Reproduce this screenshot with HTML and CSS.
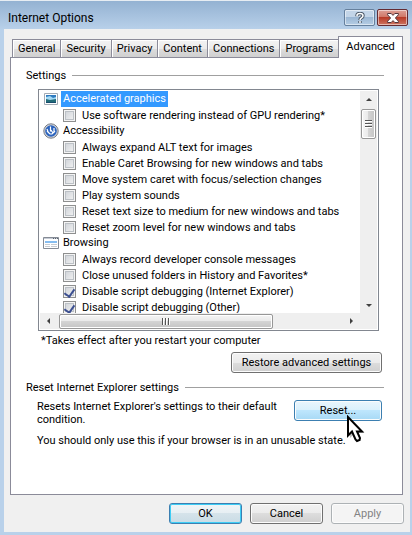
FILE: index.html
```html
<!DOCTYPE html>
<html lang="en">
<head>
  <meta charset="UTF-8">
  <meta name="viewport" content="width=device-width, initial-scale=1.0">
  <title>Internet Options</title>
  <link rel="stylesheet" href="styles.css">
</head>
<body>
  <div class="window">
    <!-- Title bar -->
    <header class="title-bar">
      <h1>Internet Options</h1>
      <button class="caption-btn help-btn" aria-label="Help">
        <svg viewBox="0 0 12 12"><path d="M3 4.2V3.5Q3 1.5 6 1.5T9 3.7Q9 5 7.5 5.8T6 8M6 9v2" fill="none" stroke="#4a5766" stroke-width="3.4"/><path d="M3 4.2V3.5Q3 1.5 6 1.5T9 3.7Q9 5 7.5 5.8T6 8M6 9v2" fill="none" stroke="#fff" stroke-width="1.5"/></svg>
      </button>
      <button class="caption-btn close-btn" aria-label="Close">
        <svg viewBox="0 0 12 12"><path d="M.6 1.5h3.6L6 3.4l1.8-1.9h3.6v1.3L8.4 6l3 3.200v1.300H7.800L6 8.600l-1.800 1.900H.6V9.200l3-3.200-3-3.200z" fill="#fff" stroke="#53363c"/></svg>
      </button>
    </header>

    <main class="client">
      <nav class="tabs" role="tablist">
        <button class="tab" role="tab">General</button>
        <button class="tab" role="tab">Security</button>
        <button class="tab" role="tab">Privacy</button>
        <button class="tab" role="tab">Content</button>
        <button class="tab" role="tab">Connections</button>
        <button class="tab" role="tab">Programs</button>
        <button class="tab active" role="tab" aria-selected="true">Advanced</button>
      </nav>

      <div class="panel" role="tabpanel">
        <h2 class="group-title">Settings</h2>

        <div class="list-box">
          <div class="list">
            <div class="row heading selected">
              <svg viewBox="0 0 16 16"><path d="M1.500 2.500h13v11h-13z" fill="#fff" stroke="#a3abb5"/><path d="M3 4h10v8H3z" fill="#2f7cc0"/><path d="M3 6l4-1 3 2 3-1v3H3z" fill="#a5daf5"/><path d="M3 8l4 1 6-1v4H3z" fill="#226b78"/><path d="M3 11h10v1H3z" fill="#174c6c"/></svg>
              <span>Accelerated graphics</span>
            </div>
            <label class="row"><input type="checkbox">Use software rendering instead of GPU rendering*</label>
            <div class="row heading">
              <svg viewBox="0 0 16 16"><circle cx="8" cy="8" r="7.200" fill="#d2d5da" stroke="#777b84"/><circle cx="8" cy="8" r="5.800" fill="#2b63bd"/><path d="M7.500 3.500v5M4 6l1.500 4M11 5v5M4 8l3 3h2l3-3M8 7l2 3" fill="none" stroke="#fff" stroke-width="1.200"/></svg>
              <span>Accessibility</span>
            </div>
            <label class="row"><input type="checkbox">Always expand ALT text for images</label>
            <label class="row"><input type="checkbox">Enable Caret Browsing for new windows and tabs</label>
            <label class="row"><input type="checkbox">Move system caret with focus/selection changes</label>
            <label class="row"><input type="checkbox">Play system sounds</label>
            <label class="row"><input type="checkbox">Reset text size to medium for new windows and tabs</label>
            <label class="row"><input type="checkbox">Reset zoom level for new windows and tabs</label>
            <div class="row heading">
              <svg viewBox="0 0 16 16"><path d="M.5 2.500h15v11H.5z" fill="#fff" stroke="#858b95"/><path d="M1 3h14v1H1z" fill="#c5cbd5"/><path d="M10 3h1v1h-1zM12 3h1v1h-1zM14 3h1v1h-1z" fill="#59616d"/><path d="M2 6h12v2H2z" fill="#86bdf0"/><path d="M2 9.500h5M8 9.500h6M2 11.500h5M8 11.500h6" stroke="#c8ccd2"/></svg>
              <span>Browsing</span>
            </div>
            <label class="row"><input type="checkbox">Always record developer console messages</label>
            <label class="row"><input type="checkbox">Close unused folders in History and Favorites*</label>
            <label class="row"><input type="checkbox" checked>Disable script debugging (Internet Explorer)</label>
            <label class="row"><input type="checkbox" checked>Disable script debugging (Other)</label>
          </div>
          <div class="scrollbar vertical">
            <i class="arrow up"></i>
            <div class="thumb"><i class="grip"></i></div>
            <i class="arrow down"></i>
          </div>
          <div class="scrollbar horizontal">
            <i class="arrow left"></i>
            <div class="thumb"><i class="grip"></i></div>
            <i class="arrow right"></i>
          </div>
          <div class="scrollbar corner"></div>
        </div>

        <p class="footnote">*Takes effect after you restart your computer</p>
        <div class="restore-row">
          <button class="btn restore-btn">Restore advanced settings</button>
        </div>

        <h2 class="group-title">Reset Internet Explorer settings</h2>
        <div class="reset-row">
          <p>Resets Internet Explorer's settings to their default condition.</p>
          <div class="reset-wrap">
            <button class="btn reset-btn">Reset...</button>
            <svg class="pointer" viewBox="0 0 19 29"><path d="M4 4v19l4-4 3 7h4l-3-8h6z" fill="#000" opacity=".25"/><path d="M2 2v18.500l4-4 3.500 8 1.500 1.500 2.500-1 .5-2-3-6.500h5z" fill="#fff" stroke="#000" stroke-width="2"/></svg>
          </div>
        </div>
        <p class="hint">You should only use this if your browser is in an unusable state.</p>
      </div>

      <!-- Dialog buttons -->
      <footer class="dialog-buttons">
        <button class="btn default">OK</button>
        <button class="btn">Cancel</button>
        <button class="btn" disabled>Apply</button>
      </footer>
    </main>
  </div>
</body>
</html>
```
FILE: styles.css
```css
:root {
  --frame: #b9d1ea;
  --face: #f0f0f0;
  --line: #8b8b99;
  --text: #000;
}

* {
  margin: 0;
  padding: 0;
  box-sizing: border-box;
}

body {
  font-family: Tahoma, Roboto, sans-serif;
  font-size: 11px;
  line-height: 13px;
  color: var(--text);
  background: #fff;
}

button,
input {
  font: inherit;
  color: inherit;
}

h1,
h2 {
  font-size: inherit;
  font-weight: normal;
}

.window {
  display: flex;
  flex-direction: column;
  min-height: 100vh;
  padding: 0 2px 3px 4px;
  border-top: 1px solid #e7edf3;
  background: linear-gradient(#94b2d2, var(--frame) 29px);
}

/* Title bar */
.title-bar {
  display: flex;
  gap: 2px;
  height: 28px;
  padding: 8px 2px 0 4px;
}

.title-bar h1 {
  flex: 1;
  font-size: 12px;
  line-height: 18px;
}

.caption-btn {
  display: flex;
  align-items: center;
  justify-content: center;
  width: 31px;
  height: 17px;
  border: 1px solid #66809d;
  border-radius: 2px;
  box-shadow: inset 0 0 0 1px rgba(255, 255, 255, 0.5);
  background: linear-gradient(#c3d5e8 50%, #9bb7d4 50%, #b5cde4);
}

.caption-btn svg {
  width: 12px;
  height: 12px;
}

.close-btn {
  border-color: #642b32;
  background: linear-gradient(#dda096, #cf7463 50%, #b83b27 50%, #cd7562);
}

/* Client area */
.client {
  flex: 1;
  display: flex;
  flex-direction: column;
  padding: 7px 6px 8px;
  background: var(--face);
}

.tabs {
  display: flex;
  align-items: flex-end;
  height: 21px;
  padding: 0 2px;
  position: relative;
}

.tab {
  height: 18px;
  padding: 0 5px;
  border: 1px solid var(--line);
  border-bottom: 0;
  margin-right: -1px;
  white-space: nowrap;
  box-shadow: inset 1px 1px #fff;
  background: linear-gradient(#f3f3f3, #ebebeb 50%, #dddddd 50%, #d0d0d0);
}

.tab.active {
  height: 22px;
  margin-bottom: -1px;
  padding: 0 7px 3px;
  background: #fff;
}

.panel {
  flex: 1;
  margin-right: 1px;
  padding: 11px 18px 0 15px;
  border: 1px solid var(--line);
  background: #fff;
}

.group-title {
  display: flex;
  align-items: center;
  gap: 6px;
}

.group-title::after {
  content: "";
  flex: 1;
  border-top: 1px solid #a0a0a0;
}

/* Settings list */
.list-box {
  display: grid;
  grid-template-columns: 1fr 17px;
  grid-template-rows: 222px 16px;
  margin: 7px 5px 0 12px;
  padding: 1px;
  border: 1px solid #828790;
}

.list {
  overflow: hidden;
}

.row {
  display: flex;
  align-items: center;
  gap: 6px;
  height: 16px;
  padding-left: 23px;
  white-space: nowrap;
}

.heading {
  gap: 2px;
  padding-left: 3px;
}

.heading svg {
  width: 16px;
  height: 16px;
}

.heading span {
  padding: 0 2px;
  line-height: 16px;
}

.selected span {
  color: #fff;
  background: #3399ff;
}

.row input {
  appearance: none;
  width: 13px;
  height: 13px;
  border: 1px solid #8e8f8f;
  box-shadow: inset 0 0 0 1px #f4f4f4, inset 0 0 0 2px #bcc1c6;
  background: linear-gradient(135deg, #cbcfd5, #f6f6f6);
}

.row input:checked::after {
  content: "";
  display: block;
  width: 5px;
  height: 8px;
  margin: 1px auto 0;
  border: solid #3c4f91;
  border-width: 0 2px 2px 0;
  transform: rotate(35deg);
}

/* Scrollbars */
.scrollbar {
  display: flex;
  align-items: center;
  background: #efefef;
}

.vertical {
  flex-direction: column;
  justify-content: space-between;
}

.arrow {
  border: 3px solid transparent;
}

.arrow.up {
  margin-top: 4px;
  border-bottom-color: #404040;
}

.arrow.down {
  margin-bottom: 3px;
  border-top-color: #404040;
}

.arrow.left {
  margin: 0 9px 0 4px;
  border-right-color: #404040;
}

.arrow.right {
  margin: 0 4px 0 auto;
  border-left-color: #404040;
}

.thumb {
  display: flex;
  align-items: center;
  justify-content: center;
  border: 1px solid #979797;
  border-radius: 2px;
  box-shadow: inset 0 0 0 1px #fff;
}

.vertical .thumb {
  width: 15px;
  height: 30px;
  margin: 8px 0 auto;
  background: linear-gradient(90deg, #f5f5f5, #e9e9e9 50%, #d4d4d4 50%, #c4c4c4);
}

.horizontal .thumb {
  width: 67%;
  height: 15px;
  background: linear-gradient(#f5f5f5, #e9e9e9 50%, #d4d4d4 50%, #c4c4c4);
}

.grip {
  width: 7px;
  height: 8px;
  background: repeating-linear-gradient(#555 0 1px, #fff 1px 2px, transparent 2px 3px);
}

.horizontal .grip {
  width: 8px;
  height: 7px;
  background: repeating-linear-gradient(90deg, #555 0 1px, #fff 1px 2px, transparent 2px 3px);
}

.footnote {
  padding: 3px 0 0 15px;
}

/* Buttons */
.btn {
  width: 73px;
  height: 21px;
  border: 1px solid #707070;
  border-radius: 3px;
  box-shadow: inset 0 0 0 1px #fcfcfc;
  background: linear-gradient(#f2f2f2, #ebebeb 50%, #dddddd 50%, #cfcfcf);
}

.btn:disabled {
  border-color: #adb2b5;
  color: #838383;
  background: #f4f4f4;
}

.btn.default {
  border-color: #3c7fb1;
  box-shadow: inset 0 0 0 1px #3dcdf5;
  background: linear-gradient(#f0f5f7, #e6eff3 50%, #d5e3ea 50%, #c9dce5);
}

.restore-row {
  display: flex;
  justify-content: flex-end;
  padding: 5px 2px 8px;
}

.restore-btn {
  width: 151px;
}

.reset-row {
  display: flex;
  gap: 4px;
  padding: 6px 2px 0 11px;
}

.reset-row p {
  flex: 1;
}

.reset-wrap {
  position: relative;
}

.reset-btn {
  width: 88px;
  border-color: #3c7fb1;
  background: linear-gradient(#eaf6fd, #d9f0fc 50%, #bee6fd 50%, #a7d9f5);
}

/* Mouse pointer resting on the Reset button */
.pointer {
  position: absolute;
  left: 52px;
  top: 15px;
  width: 19px;
  height: 29px;
}

.hint {
  padding: 8px 0 0 11px;
}

.dialog-buttons {
  display: flex;
  justify-content: flex-end;
  gap: 8px;
  padding-top: 8px;
}
```
